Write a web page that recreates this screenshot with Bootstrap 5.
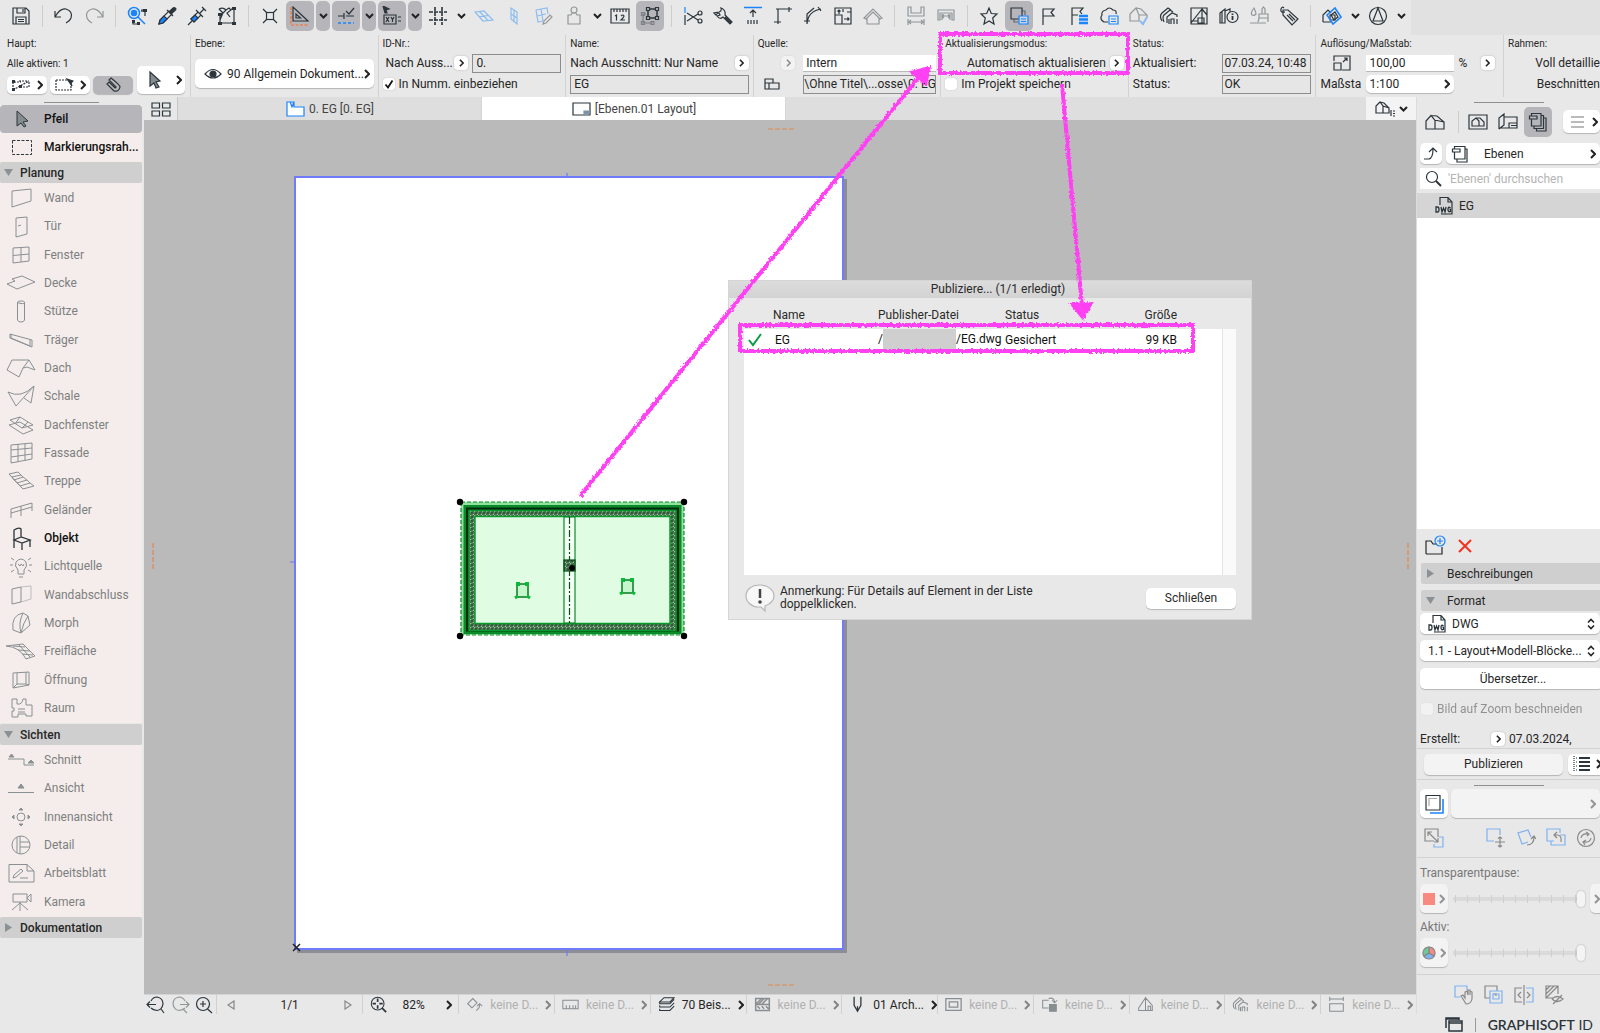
<!DOCTYPE html>
<html lang="de">
<head>
<meta charset="utf-8">
<meta name="viewport" content="width=device-width, initial-scale=1">
<title>Ebenen.01 Layout</title>
<link href="https://cdn.jsdelivr.net/npm/bootstrap@5.3.0/dist/css/bootstrap.min.css" rel="stylesheet">
<style>
:root{--ink:#2b353b;--panel:#e8e8e8;--pressed:#b5b5ba;--rule:#d2d2d2;--blue:#1a84ff}
body{font-family:Roboto,"Liberation Sans",sans-serif;font-size:12px;line-height:16px;color:#262626;background:var(--panel);overflow:hidden}
button,input,select{font:inherit;color:inherit}
button{border:0;background:none;padding:0}
svg{display:block;flex:none;fill:none;stroke:currentColor;stroke-width:1.2}
.ic{width:20px;height:20px;color:var(--ink)}
.s-blue{stroke:#8cbcf0}.s-gray{stroke:#888}
.chv{width:6px;height:10px;stroke-width:2;color:#222}
.chd{width:9px;height:6px;stroke-width:2;color:#222}
.off{opacity:.45}
.page{min-height:100vh}
/* toolbar */
.toolbar-strip{background:#e1e1e1;height:35px}
.toolbar-in{background:var(--panel);padding:1px 2px 4px 6px}
.tb,.tbd{height:30px;display:flex;align-items:center;justify-content:center;border-radius:5px;margin:0 1px}
.tb{width:28px}.tbd{width:14px}
.pressed,.white-btn.pressed{background:var(--pressed)}
.vr1{width:1px;height:22px;margin:0 6px;background:#cdcdcd}
/* info bar */
.infobar{display:grid;grid-template-columns:190px repeat(7,minmax(0,1fr)) 97px;height:62px}
.sec{border-left:1px solid var(--rule);padding:1px 4px 0;overflow:hidden;white-space:nowrap}
.sec:first-child{border:0;padding-left:7px}
.cap{font-size:10px;line-height:16px;display:block}
.r2,.r3{height:18px;display:flex;align-items:center}
.r2{margin-top:2px}.r3{margin-top:3px}
.white-btn{background:#fff;border-radius:5px;box-shadow:0 1px 1px rgba(0,0,0,.22);display:flex;align-items:center;flex:none}
.mini{width:14px;height:14px;background:#fff;border-radius:4px;box-shadow:0 0 2px rgba(0,0,0,.25);display:flex;align-items:center;justify-content:center;flex:none}
.mini .chv{width:5px;height:8px}
.ro{height:19px;border:1px solid #8d8d8d;background:#e6e6e6;padding:0 3px;border-radius:0;min-width:0}
.wf{height:17px;border:0;border-bottom:1px solid #bbb;background:#fff;padding:0 3px;min-width:0}
.tick{appearance:none;width:12px;height:12px;background:#fff;border-radius:3px;box-shadow:0 0 1px rgba(0,0,0,.35);margin:0;flex:none}
.tick:checked{background:#fff url("data:image/svg+xml,%3Csvg xmlns='http://www.w3.org/2000/svg' viewBox='0 0 12 12'%3E%3Cpath d='M2.5 6.5 5 9.5 9.5 2.5' fill='none' stroke='%23111' stroke-width='1.8'/%3E%3C/svg%3E")}
/* tool palette */
.palette{width:144px;padding-right:2px}
.grip{height:8px;padding-top:5px}
.grip i{display:block;height:1px;width:55px;margin:0 auto;background:#8f8f8f}
.tools{background:#f5edeb;list-style:none;margin:0;padding:1px 0}
.tools button{display:flex;align-items:center;width:100%;height:28px;padding-left:6px;color:#7d7f80;white-space:nowrap}
.tools li:nth-child(3n) button{height:29px}
.tools svg{width:30px;height:24px;margin-right:8px;stroke-width:1;color:#8a9093}
.tools button.live{color:#111;font-weight:500}
.tools button.live svg{color:var(--ink)}
.heads{padding:0 0 1px}
.heads button.sel{background:var(--pressed);border-radius:4px}
.ghead{display:flex;align-items:center;gap:7px;width:100%;height:21px;background:#cfcfcf;border-radius:2px;padding-left:4px;font-weight:500}
.ghead svg{width:9px;height:9px;fill:#8a9093;stroke:none}
/* centre */
.tabs{height:23px;background:#dedede}
.tabs button{display:flex;align-items:center;justify-content:center;gap:4px;color:#444}
.tab{width:304px;border-right:1px solid #d6d6d6}
.tab.on{background:#fff}
.stage{background:#bababa;position:relative;overflow:hidden}
.sheet{position:absolute;left:150px;top:56px;width:550px;height:774px;background:#fff;border:2px solid #6f7bfb;box-shadow:3px 3px 0 #8d8d95}
.dash{position:absolute;color:#e0894f}
.statusbar{height:20px;border-top:1px solid #d4d4d4;white-space:nowrap}
.cell{border-left:1px solid #d0d0d0;display:flex;align-items:center;width:96px;flex:0 1 96px;min-width:0;padding:0 6px 0 7px;gap:7px}
.cell .chv{margin-left:auto}
.cell .ic{width:17px;height:17px}
.cell.dim{color:#b0b0b0}
.cell.dim .ic,.cell.dim .chv{opacity:.5}
/* publish dialog */
.pub{position:absolute;left:584px;top:160px;width:524px;height:340px;background:#e8e8e8;border:1px solid #d5d5d5;color:#2a2a2a}
.pub-title{height:17px;background:linear-gradient(#dcdcdc,#d3d3d3);text-align:center;line-height:16px;padding-left:16px}
.pub-body{padding:9px 15px 0}
.pub table{width:491px;table-layout:fixed;margin:0}
.pub th{font-weight:400;height:22px;padding:0 0 6px;vertical-align:middle}
.pub td{height:21px;padding:0;background:#fff;color:#111}
.listbg{background:#fff;height:225px}
.redact{display:inline-block;width:73px;height:21px;background:#cfcfcf;vertical-align:middle}
.track{position:absolute;right:15px;top:48px;width:14px;height:246px;background:#fafafa;border-left:1px solid #e4e4e4}
/* right column */
.side{width:184px;border-left:1px solid #dcdcdc;white-space:nowrap;overflow:hidden}
.side .h21{height:21px}
.side .ghead{font-weight:400;padding-left:5px;gap:12px}
.side ::placeholder{color:#b4b4b4;opacity:1}
.bar{background:#d5d5d5}
.plist{background:#fff;height:311px}
.pop{height:21px;margin:0 0 0 3px;padding:0 5px 0 8px}
.pop select{appearance:none;border:0;background:none;padding:0;flex:1 1 auto;min-width:0;outline:0}
.rng{appearance:none;flex:none;width:132px;height:18px;background:repeating-linear-gradient(90deg,#cfcfcf 0 1px,transparent 1px 12px) 2px 5px/124px 8px no-repeat,linear-gradient(#dadada,#dadada) 0 7px/128px 4px no-repeat;margin:0}
.rng::-webkit-slider-thumb{appearance:none;width:8px;height:16px;border-radius:4px;background:#f4f4f4;box-shadow:0 0 2px rgba(0,0,0,.3)}
.soft{background:#f3f3f3}
.line{height:1px;background:#d2d2d2}
.foot{height:21px;padding-right:7px}
.brandtxt{font-family:Lato,sans-serif;font-size:14px;line-height:20px;color:var(--ink)}
.marks{position:absolute;inset:0;width:1600px;height:1033px;pointer-events:none;color:#ff3ff3}
</style>
<script src="https://cdn.jsdelivr.net/npm/bootstrap@5.3.0/dist/js/bootstrap.bundle.min.js"></script>
</head>
<body>
<svg width="0" height="0" class="position-absolute" aria-hidden="true">
<symbol id="cr" viewBox="0 0 6 10"><path d="M1 1 5 5 1 9"/></symbol>
<symbol id="cd" viewBox="0 0 9 6"><path d="M1 1 4.500 4.500 8 1"/></symbol>
<symbol id="ud" viewBox="0 0 8 12"><path d="M1 4.500 4 1.500 7 4.500M1 7.500 4 10.500 7 7.500" stroke-width="1.600"/></symbol>
<symbol id="arrow" viewBox="0 0 20 20"><path d="M5 2 15 11 11 12 14 17 11 18 9 13 5 16Z" fill="#848c90"/></symbol>
<symbol id="house" viewBox="0 0 20 20"><path d="M1 17V9L6 3.500 10 8.500V17ZM6 3.500 12 4 19 10V17H10M10 8.500H12L19 10"/></symbol>
<symbol id="dwg" viewBox="0 0 20 20"><path d="M5 9V1.500H13L17 6V18H6M13 1.500V6H17"/><g stroke-width="1.300"><path d="M1 11V16H2.500Q4 16 4 13.500 4 11 2.500 11ZM6 11 7 16 8.500 12 10 16 11 11M15.500 12Q13 10 13 13.500 13 16.500 15.500 15.500V13.500H14.500"/></g></symbol>
<symbol id="stack" viewBox="0 0 20 20"><path d="M3.500 4V1.500H13V14H3.500V7M1.500 4H9V7H1.500ZM13 3.500H15.500V16.500H6V14M15.500 6H18V19H8.500V16.500"/></symbol>
<symbol id="page" viewBox="0 0 20 20"><path d="M4.500 5V2.500H15V15H4.500V8M2.500 5H10V8H2.500ZM15 5H17V18H7V15"/></symbol>
<symbol id="tri-d" viewBox="0 0 9 9"><path d="M0 1H9L4.500 8Z"/></symbol>
<symbol id="tri-r" viewBox="0 0 9 9"><path d="M1 0 8 4.500 1 9Z"/></symbol>
<symbol id="quick" viewBox="0 0 20 20"><path d="M3 15Q0 10 3 7L9 2 12 4M5 16Q3 11 5 9L11 4 14 6M8 17V11L13 7 18 9V11M10 18V13M12 18V13H15V18M18 18V13"/></symbol>
</svg>

<div class="page d-flex flex-column">
<header>
<div class="toolbar-strip d-flex">
<div class="toolbar-in d-flex align-items-center" role="toolbar" aria-label="Standard">
<button class="tb" aria-label="Sichern"><svg class="ic" viewBox="0 0 20 20"><path d="M2 2H15L18 5V18H2ZM6 2V7H14V2M5 18V11H15V18M7 13.500H13M7 15.500H13M12 3V6"/></svg></button>
<span class="vr1"></span>
<button class="tb" aria-label="Widerrufen"><svg class="ic" viewBox="0 0 20 20"><path d="M1 5V11H7M1 11Q6 2 12 3 19 5 17 12 16 15 12 17"/></svg></button>
<button class="tb off" aria-label="Wiederholen"><svg class="ic" viewBox="0 0 20 20"><path d="M19 5V11H13M19 11Q14 2 8 3 1 5 3 12 4 15 8 17"/></svg></button>
<span class="vr1"></span>
<button class="tb" aria-label="Suchen und Aktivieren"><svg class="ic" viewBox="0 0 20 20"><g stroke="#1a84ff" stroke-width="1.500"><circle cx="7" cy="7" r="5.500"/><circle cx="7" cy="7" r="2.500" fill="#1a84ff"/><path d="M11 11 18 18"/></g><path d="M14 4H18V10M15 6V4M6 14V18H12"/><path d="M16 3h4v3h-4zM5 14h3v3H5zM10 16h3v3h-3z" fill="currentColor" stroke="none"/></svg></button>
<button class="tb" aria-label="Parameter aufnehmen"><svg class="ic" viewBox="0 0 20 20"><path d="M2 18 3 14 12 5 15 8 6 17Z"/><path d="M2 18 3 14 7 10 10 13 6 17Z" fill="#1a84ff"/><path d="M10 4 16 10M13 5 16 2Q18 1 19 3 19 4 15 7Z" fill="#2b353b"/></svg></button>
<button class="tb" aria-label="Parameter übertragen"><svg class="ic" viewBox="0 0 20 20"><path d="M1 19 5 15M4 13 11 6 14 9 7 16ZM9 4 16 11M13 7 17 3M15 1 19 5"/><path d="M4 13 8 9 11 12 7 16Z" fill="#1a84ff"/></svg></button>
<button class="tb" aria-label="Bearbeiten"><svg class="ic" viewBox="0 0 20 20"><path d="M3 8V17H17V3H14M2 3Q6 1 9 4L12 2 14 4 10 7 13 11M2 3 6 7 3 14M6 7 9 4"/><path d="M1 7h4v3H1zM15 1h4v3h-4zM15 16h4v3h-4zM1 16h4v3H1z" fill="currentColor" stroke="none"/></svg></button>
<span class="vr1"></span>
<button class="tb" aria-label="Fangpunkte"><svg class="ic" viewBox="0 0 20 20"><path d="M3 3 17 17M17 3 3 17"/><rect x="6.500" y="6.500" width="7" height="7" fill="#e8e8e8"/></svg></button>
<button class="tb pressed" aria-label="Hilfslinien"><svg class="ic" viewBox="0 0 20 20"><path d="M3 1V15H18ZM6 8V12H10.500Z"/><path d="M1 1V19H19" stroke="#ff6a24" stroke-dasharray="3 1.500"/></svg></button>
<button class="tbd pressed" aria-label="Menü"><svg class="chd"><use href="#cd"/></svg></button>
<button class="tb pressed" aria-label="Fanghilfe"><svg class="ic" viewBox="0 0 20 20"><path d="M2 10H8M8 7V13M10 10H18M10 5 13 8 18 2"/><path d="M2 17H18" stroke="#1a84ff" stroke-width="1.500" stroke-dasharray="3 2"/></svg></button>
<button class="tbd pressed" aria-label="Menü"><svg class="chd"><use href="#cd"/></svg></button>
<button class="tb pressed" aria-label="Koordinaten"><svg class="ic" viewBox="0 0 20 20"><path d="M2 9H14V18H2ZM16 11H19M16 15H19M4 11 7 16M7 11 4 16M9 11 10.500 13.500 12 11M10.500 13.500V16"/><path d="M1 0 7 3 4 4 5 7 3 7Z" fill="currentColor"/></svg></button>
<button class="tbd pressed" aria-label="Menü"><svg class="chd"><use href="#cd"/></svg></button>
<button class="tb" aria-label="Raster"><svg class="ic" viewBox="0 0 20 20"><path d="M7 1V19M14 1V19M1 6H19M1 14H19" stroke-width="1.600" stroke-dasharray="4 1"/></svg></button>
<button class="tbd" aria-label="Menü"><svg class="chd"><use href="#cd"/></svg></button>
<button class="tb" aria-label="Ebene"><svg class="ic s-blue" viewBox="0 0 20 20"><path d="M1 6 10 5 19 14 9 15ZM5 10.500 15 9.500M5.500 5.500 14 14.500"/></svg></button>
<button class="tb" aria-label="Ebene vertikal"><svg class="ic s-blue" viewBox="0 0 20 20"><path d="M7 2 13 6V18L7 13ZM7 8 13 12M10 4V15"/></svg></button>
<button class="tb" aria-label="Ebene bearbeiten"><svg class="ic" viewBox="0 0 20 20"><path d="M2 4 13 2 14 8M2 4 4 16 9 15M3 10 12 8M7 3 9 15" stroke="#8cbcf0"/><path d="M9 18 10 15 16 9 18 11 12 17Z" stroke="#999"/></svg></button>
<button class="tb off" aria-label="Gewicht"><svg class="ic" viewBox="0 0 20 20"><circle cx="10" cy="4" r="3"/><path d="M4 18V9H7L8 7H12L13 9H16V18Z"/></svg></button>
<button class="tbd" aria-label="Menü"><svg class="chd"><use href="#cd"/></svg></button>
<button class="tb" aria-label="Maß"><svg class="ic" viewBox="0 0 20 20"><path d="M1 3H19V17H1ZM4 3V6M7 3V6M10 3V6M13 3V6M16 3V6M5 10 6.500 9V14.500M11 10Q13 8 14 10 14 11 11 14H15"/></svg></button>
<button class="tb pressed" aria-label="Gruppen"><svg class="ic" viewBox="0 0 20 20"><path d="M8 3H17V12H8Z" stroke-width="1.500"/><g fill="#b5b5ba"><path d="M6.500 1.500h3v3h-3zM15.500 1.500h3v3h-3zM6.500 10.500h3v3h-3zM15.500 10.500h3v3h-3z"/></g><path d="M6 8H3V17H12V15M1.500 6.500h3v3h-3zM1.500 15.500h3v3h-3zM11 15.500h3v3h-3z" opacity=".4"/></svg></button>
<span class="vr1"></span>
<button class="tb" aria-label="Trennen"><svg class="ic" viewBox="0 0 20 20"><path d="M2 1V7" stroke="#1a84ff"/><path d="M2 9V19M4 7 15 14M4 15 15 8"/><circle cx="17" cy="7" r="2"/><circle cx="17" cy="15" r="2"/></svg></button>
<button class="tb" aria-label="Anpassen"><svg class="ic" viewBox="0 0 20 20"><path d="M1 7 3 9Q6 5 7 9L4 10Q7 14 10 11L17 18 19 16 12 9Q13 4 8 2 9 5 6 6Z"/><path d="M12 11 18 17" stroke-width="2.200"/></svg></button>
<button class="tb" aria-label="Ausrichten"><svg class="ic" viewBox="0 0 20 20"><path d="M1 1.500H19" stroke="#1a84ff" stroke-width="1.500"/><path d="M10 11V4M7 7 10 4 13 7M5 14V18M8 14V18M11 14V18M14 14V18"/></svg></button>
<button class="tb" aria-label="Schneiden"><svg class="ic" viewBox="0 0 20 20"><path d="M5 18V3H19M1 16H8M16 1V6M3 3H6"/></svg></button>
<button class="tb" aria-label="Abrunden"><svg class="ic" viewBox="0 0 20 20"><path d="M4 18Q5 5 18 3M1 15H7M15 1 18 5M4 18V8L11 2"/></svg></button>
<button class="tb" aria-label="Größe ändern"><svg class="ic" viewBox="0 0 20 20"><path d="M2 2H18V18H2ZM2 9H9V18M6 8V4M4.500 5.500 6 4 7.500 5.500M11 13H16M14.500 11.500 16 13 14.500 14.500M10 3V6M14 6H18"/></svg></button>
<button class="tb off" aria-label="Dach"><svg class="ic" viewBox="0 0 20 20"><path d="M1 12 10 3 19 12 17 13 10 6 3 13ZM4 12V18H16V12"/></svg></button>
<span class="vr1"></span>
<button class="tb off" aria-label="Abstand"><svg class="ic" viewBox="0 0 20 20"><path d="M2 1V10H18V1H15V7H5V1ZM2 13V19M18 13V19M3 16H17M5 14 3 16 5 18M15 14 17 16 15 18"/></svg></button>
<button class="tb off" aria-label="Bemaßen"><svg class="ic" viewBox="0 0 20 20"><path d="M2 4H18V14H16V7H4V14H2ZM6 10H14M8 8.500 6 10 8 12M12 8.500 14 10 12 12M6 8V14M14 8V14"/></svg></button>
<span class="vr1"></span>
<button class="tb" aria-label="Favoriten"><svg class="ic" viewBox="0 0 20 20"><path d="M10 2 12.300 7.500 18 8 13.700 12 15 18 10 15 5 18 6.300 12 2 8 7.700 7.500Z"/></svg></button>
<button class="tb pressed" aria-label="Zeichnungsmanager"><svg class="ic" viewBox="0 0 20 20"><path d="M2 2H13V13H2Z"/><path d="M5 13V16H9M13 5H16V9" opacity=".6"/><path d="M10 10H19V18H10Z" stroke="#1a84ff" fill="#c6d3e8"/><path d="M12 13H17M12 15.500H17" stroke="#1a84ff"/></svg></button>
<button class="tb" aria-label="Fahne"><svg class="ic" viewBox="0 0 20 20"><path d="M4 19V3H15L12 6.500 15 10H4"/></svg></button>
<button class="tb" aria-label="Fahnenliste"><svg class="ic" viewBox="0 0 20 20"><path d="M3 19V2H14L11 5.500 13 8M3 9H9"/><path d="M10 10H19M10 13.500H19M10 17H19" stroke="#1a84ff" stroke-width="2.400"/></svg></button>
<button class="tb" aria-label="Wolke"><svg class="ic" viewBox="0 0 20 20"><path d="M9 16H5Q0 13 3 9 2 5 7 4 10 0 14 4 18 4 17 8"/><path d="M10 10H19V18H10ZM12 13H17M12 15.500H17" stroke="#1a84ff"/></svg></button>
<button class="tb off" aria-label="Prüfen"><svg class="ic" viewBox="0 0 20 20"><path d="M1 8 7 2 12 3 18 9V12M1 8V15H10V9L7 2M10 9 18 9"/><path d="M11 15 14 18 18 11" stroke="#1a84ff" stroke-width="2"/></svg></button>
<button class="tb" aria-label="Umbau"><svg class="ic"><use href="#quick"/></svg></button>
<button class="tb" aria-label="Ansicht"><svg class="ic" viewBox="0 0 20 20"><path d="M2 2H18V18H2ZM2 17 13 3V17M13 3 18 9M9 12H15V17H9ZM2 15H9"/></svg></button>
<button class="tb" aria-label="Info"><svg class="ic" viewBox="0 0 20 20"><path d="M1 17V7L6 3V17ZM6 5 11 3V6M3 17V6"/><circle cx="13.500" cy="11" r="5.500"/><path d="M13.500 10V14M13.500 7.500V9" stroke-width="1.800"/></svg></button>
<button class="tb off" aria-label="Oberflächen"><svg class="ic" viewBox="0 0 20 20"><path d="M5 2Q1 7 3 9 5 10 7 8 7 6 5 2ZM10 8H19V12H10ZM13 8V3L14.500 1 16 3V8M10 12 9 16M19 12V16M1 17H17"/></svg></button>
<button class="tb" aria-label="Etikett"><svg class="ic" viewBox="0 0 20 20"><path d="M4 4 9 4 19 13 13 19 4 9ZM8 9 14 15M10 8 16 14"/><path d="M6 6Q1 7 2 3 3 0 5 2"/></svg></button>
<span class="vr1"></span>
<button class="tb" aria-label="3D"><svg class="ic" viewBox="0 0 20 20"><path d="M1 16V9L6 4 9 7M1 16H9M8 9H13V14H8Z"/><path d="M5 9 13 2 19 11 11 18Z" stroke="#1a84ff" stroke-width="1.600"/><path d="M9 9 13 6 16 11 12 14Z"/></svg></button>
<button class="tbd" aria-label="Menü"><svg class="chd"><use href="#cd"/></svg></button>
<button class="tb" aria-label="Norden"><svg class="ic" viewBox="0 0 20 20"><circle cx="10" cy="10" r="8.500"/><path d="M10 2 15 15H5Z"/></svg></button>
<button class="tbd" aria-label="Menü"><svg class="chd"><use href="#cd"/></svg></button>
</div>
</div>

<div class="infobar">
<section class="sec">
<span class="cap">Haupt:</span>
<div class="d-flex gap-1">
<div>
<span class="cap pt-1 mb-1">Alle aktiven: 1</span>
<div class="d-flex" style="gap:3px">
<button class="white-btn justify-content-between px-1" style="width:40px;height:18px" aria-label="Geometrie"><svg class="ic" viewBox="0 0 20 20"><path d="M2 15V7H10M2 15 18 6M9 12H18V6M8 6H18" stroke-dasharray="2 1"/><path d="M1 5h3v3H1zM1 13h3v3H1zM8 10h3v3H8z" fill="currentColor" stroke="none"/></svg><svg class="chv"><use href="#cr"/></svg></button>
<button class="white-btn justify-content-between px-1" style="width:40px;height:18px" aria-label="Auswahl"><svg class="ic" viewBox="0 0 20 20"><path d="M2 5H14M2 5V15H17V9" stroke-dasharray="2 1"/><path d="M13 4 19 6 17 8 18 11Z" fill="currentColor"/></svg><svg class="chv"><use href="#cr"/></svg></button>
<button class="white-btn pressed justify-content-center" style="width:40px;height:18px" aria-label="Magnet"><svg class="ic" viewBox="0 0 20 20"><path d="M4 9 11 16Q16 17 17 12 17 10 8 3L6 5 13 12Q13 13 12 13L6 7Z"/></svg></button>
</div></div>
<button class="white-btn justify-content-between align-self-end" style="width:48px;height:28px;padding:0 3px 0 8px" aria-label="Pfeilwerkzeug"><svg class="ic"><use href="#arrow"/></svg><svg class="chv"><use href="#cr"/></svg></button>
</div>
</section>
<section class="sec">
<span class="cap">Ebene:</span>
<button class="white-btn w-100 px-1" style="height:29px;margin-top:7px"><svg class="ic ms-1 me-1" viewBox="0 0 20 20"><path d="M2 10Q10 1 18 10 10 18 2 10Z"/><circle cx="10" cy="10" r="3" fill="currentColor"/></svg><span>90 Allgemein Dokument...</span><svg class="chv ms-auto"><use href="#cr"/></svg></button>
</section>
<section class="sec">
<span class="cap">ID-Nr.:</span>
<div class="r2"><label for="idn" style="width:72px;padding-left:3px">Nach Auss...</label><button class="mini me-1" aria-label="Wählen"><svg class="chv"><use href="#cr"/></svg></button><input id="idn" class="ro ms-auto" style="width:89px" value="0." readonly></div>
<div class="r3"><input type="checkbox" class="tick" id="num" checked><label for="num" class="ps-1">In Numm. einbeziehen</label></div>
</section>
<section class="sec">
<span class="cap">Name:</span>
<div class="r2 justify-content-between"><label for="nm">Nach Ausschnitt: Nur Name</label><button class="mini" aria-label="Wählen"><svg class="chv"><use href="#cr"/></svg></button></div>
<div class="r3"><input id="nm" class="ro w-100" value="EG" readonly></div>
</section>
<section class="sec">
<span class="cap">Quelle:</span>
<div class="r2 justify-content-end gap-2"><button class="mini off" disabled aria-label="Wählen"><svg class="chv"><use href="#cr"/></svg></button><input class="wf" style="width:133px" value="Intern" aria-label="Quelle"></div>
<div class="r3 justify-content-between"><svg class="ic ms-1" viewBox="0 0 20 20"><path d="M3 5H11V9H17V15H7V9H3ZM3 9V15H7M11 9H7"/></svg><input class="ro px-0" style="width:133px" value="\Ohne Titel\...osse\0. EG" readonly aria-label="Pfad"></div>
</section>
<section class="sec">
<span class="cap">Aktualisierungsmodus:</span>
<div class="r2 justify-content-end gap-1"><span>Automatisch aktualisieren</span><button class="mini" aria-label="Modus wählen"><svg class="chv"><use href="#cr"/></svg></button></div>
<div class="r3"><input type="checkbox" class="tick" id="prj"><label for="prj" class="ps-1">Im Projekt speichern</label></div>
</section>
<section class="sec">
<span class="cap">Status:</span>
<div class="r2 justify-content-between"><label for="ak">Aktualisiert:</label><input id="ak" class="ro" style="width:89px;padding:0 1px" value="07.03.24, 10:48" readonly></div>
<div class="r3 justify-content-between"><label for="st">Status:</label><input id="st" class="ro" style="width:89px;padding:0 1px" value="OK" readonly></div>
</section>
<section class="sec">
<span class="cap">Auflösung/Maßstab:</span>
<div class="r2"><svg class="ic" style="margin:0 14px 0 12px" viewBox="0 0 20 20"><path d="M2 8V3H18V17H10M2 10H9V17H2ZM11 9 15 5M12 5H15V8"/></svg><input class="wf" style="width:88px" value="100,00" aria-label="Auflösung"><span class="ps-1 flex-fill">%</span><button class="mini me-1" aria-label="Wählen"><svg class="chv"><use href="#cr"/></svg></button></div>
<div class="r3"><span style="width:46px">Maßsta</span><button class="white-btn justify-content-between" style="width:88px;height:18px;padding:0 4px 0 3px">1:100<svg class="chv"><use href="#cr"/></svg></button></div>
</section>
<section class="sec">
<span class="cap">Rahmen:</span>
<div class="r2 justify-content-end" style="margin-right:-4px">Voll detaillie</div>
<div class="r3 justify-content-end" style="margin-right:-4px">Beschnitten</div>
</section>
</div>
</header>

<main class="d-flex flex-fill">
<nav class="palette" aria-label="Werkzeuge">
<div class="grip"><i></i></div>
<ul class="tools heads">
<li><button class="live sel"><svg viewBox="0 0 30 24"><path d="M11 4 22 14 17 15 20 19 18 20 15 16 11 19Z" fill="#848c90"/></svg>Pfeil</button></li>
<li><button class="live"><svg viewBox="0 0 30 24"><path d="M6.500 5.500H25.500V19.500H6.500Z" stroke-dasharray="3 1.500"/></svg>Markierungsrah...</button></li>
</ul>
<button class="ghead"><svg><use href="#tri-d"/></svg>Planung</button>
<ul class="tools">
<li><button><svg viewBox="0 0 30 24"><path d="M6 5 25 3V15L6 21Z"/></svg>Wand</button></li>
<li><button><svg viewBox="0 0 30 24"><path d="M10 4 21 3V20L10 23ZM12 12 15 11"/></svg>Tür</button></li>
<li><button><svg viewBox="0 0 30 24"><path d="M7 5 23 4V18L7 20ZM15 4.500V19M7 12.500 23 11"/></svg>Fenster</button></li>
<li><button><svg viewBox="0 0 30 24"><path d="M1 13 9 10 6 8 16 5 29 11 11 18Z"/></svg>Decke</button></li>
<li><button><svg viewBox="0 0 30 24"><path d="M11.500 3V21Q12 23 15 23T18.500 21V3Q18 2 15 2T11.500 3 15 4.500 18.500 3"/></svg>Stütze</button></li>
<li><button><svg viewBox="0 0 30 24"><path d="M4 6 26 12V19L4 10ZM5 6V10L24 18V12"/></svg>Träger</button></li>
<li><button><svg viewBox="0 0 30 24"><path d="M6 4H23L29 14 21 11M23 4 17 12 13 21 1 14 6 4M17 12 21 11"/></svg>Dach</button></li>
<li><button><svg viewBox="0 0 30 24"><path d="M2 8Q15 15 28 2L25 19 18 14M2 8 10 22 28 2"/></svg>Schale</button></li>
<li><button><svg viewBox="0 0 30 24"><path d="M4 7 14 4 27 12 16 15ZM3 12 14 9 27 17 17 21ZM14 4 9 11M16 15 22 9"/></svg>Dachfenster</button></li>
<li><button><svg viewBox="0 0 30 24"><path d="M5 4 26 2V18L5 22ZM12 3V21M19 3V20M5 9 26 7M5 16 26 13"/></svg>Fassade</button></li>
<li><button><svg viewBox="0 0 30 24"><path d="M3 5 12 3 15 6 6 8ZM6 8 8 11 17 8 15 6M8 11 11 14 21 11 17 8M11 14 14 17 24 14 21 11M14 17 17 20 28 17 24 14M3 5 17 20"/></svg>Treppe</button></li>
<li><button><svg viewBox="0 0 30 24"><path d="M5 20V11L26 5V13M5 15 26 9M15 8V18"/></svg>Geländer</button></li>
<li><button class="live"><svg viewBox="0 0 30 24"><path d="M8 14V4Q13 1 15 3V11M8 14 15 11 24 14 16 17ZM8 14V22M16 17V24M24 14V21" stroke-width="1.300"/></svg>Objekt</button></li>
<li><button><svg viewBox="0 0 30 24"><path d="M12 16Q8 12 10 8 15 2 20 8 22 12 18 16V20H12ZM13 23H17M12 10 14 12 15 10 17 12 18 10M5 4 8 6M4 11H7M5 18 8 16M25 4 22 6M26 11H23M25 18 22 16"/></svg>Lichtquelle</button></li>
<li><button><svg viewBox="0 0 30 24"><path d="M6 6 15 4V19L6 21Z"/><path d="M15 4 25 3V16L15 19" opacity=".5"/></svg>Wandabschluss</button></li>
<li><button><svg viewBox="0 0 30 24"><path d="M7 19Q5 4 17 2L22 5 24 14 15 22ZM17 2Q12 12 15 22M22 5Q17 12 15 22"/></svg>Morph</button></li>
<li><button><svg viewBox="0 0 30 24"><path d="M0 7 17 5 29 17 20 20Q14 8 0 7ZM7 7 19 8M12 11 24 12M16 15 27 16M12 5 24 18"/></svg>Freifläche</button></li>
<li><button><svg viewBox="0 0 30 24"><path d="M7 5 23 4V17L7 20ZM11 5V16H20V4M7 20 11 16M23 17 20 16"/></svg>Öffnung</button></li>
<li><button><svg viewBox="0 0 30 24"><path d="M6 3H11V8Q16 9 17 3H20V9H26V20H20V18H12V21H6V15H8V12H6ZM12 13H19M12 16H19"/></svg>Raum</button></li>
</ul>
<button class="ghead" style="margin-top:1px"><svg><use href="#tri-d"/></svg>Sichten</button>
<ul class="tools">
<li><button><svg viewBox="0 0 30 24"><path d="M2 11H18V17H28"/><path d="M3 9 5.500 6 8 9ZM22 15 25 12 28 15Z" fill="currentColor"/></svg>Schnitt</button></li>
<li><button><svg viewBox="0 0 30 24"><path d="M2 16.500H28"/><path d="M12 12 15 8 18 12Z" fill="currentColor"/></svg>Ansicht</button></li>
<li><button><svg viewBox="0 0 30 24"><circle cx="15" cy="12" r="4"/><path d="M13 5 15 3 17 5ZM13 19 15 21 17 19ZM8 10 6 12 8 14ZM22 10 24 12 22 14Z" fill="currentColor"/></svg>Innenansicht</button></li>
<li><button><svg viewBox="0 0 30 24"><circle cx="15" cy="12" r="9"/><path d="M11 4V20M14 3V21M14 9H23M14 14H23"/></svg>Detail</button></li>
<li><button><svg viewBox="0 0 30 24"><path d="M3 3.500H21L28 10V21H3ZM21 3.500V10H28M7 17 8 14 15 8 17 10 10 16ZM14 17H22"/></svg>Arbeitsblatt</button></li>
<li><button><svg viewBox="0 0 30 24"><path d="M7 4H21V12H7ZM21 8 25 4V12ZM14 12V21M14 13 6 20M14 13 22 20"/></svg>Kamera</button></li>
</ul>
<button class="ghead"><svg><use href="#tri-r"/></svg>Dokumentation</button>
</nav>

<div class="flex-fill d-flex flex-column" style="min-width:0">
<div class="tabs d-flex">
<button style="width:34px;background:#e8e8e8;border-right:1px solid #c8c8c8" aria-label="Übersicht"><svg class="ic" viewBox="0 0 20 20"><path d="M1 4H8.500V9H1ZM11.500 4H19V9H11.500ZM1 12H8.500V17H1ZM11.500 12H19V17H11.500Z"/></svg></button>
<button class="tab"><svg class="ic" viewBox="0 0 20 20"><path d="M2 3H9V8H19V17H2ZM5 3 7 8 9 3" fill="#fff" stroke="#1a84ff"/></svg>0. EG [0. EG]</button>
<button class="tab on"><svg class="ic" viewBox="0 0 20 20"><path d="M2 4H19V16H2Z"/><path d="M13 12h5v3h-5z" fill="#7d93a8" stroke="#7d93a8"/></svg>[Ebenen.01 Layout]</button>
<button class="ms-auto" style="width:50px;background:#f3f3f3" aria-label="Modellansicht"><svg class="ic" viewBox="0 0 20 20"><path d="M1 14V7L5 3 8 7V14ZM5 3 9 4 14 9V14H8M8 7 14 9M16 11V17M18 12H20M18 14.500H20M18 17H20"/></svg><svg class="chd"><use href="#cd"/></svg></button>
</div>
<div class="stage flex-fill">
<div class="sheet"></div>
<svg class="position-absolute" style="left:145px;top:50px;width:560px;height:788px" viewBox="0 0 560 788"><path d="M278 3V8M278 780V786M1 392H6" stroke="#6f79f2"/><path d="M4 774 11 781M11 774 4 781" stroke="#222" stroke-width="1.500"/></svg>
<svg class="dash" style="left:624px;top:8px" width="28" height="2"><path d="M0 1H28" stroke-dasharray="5 2"/></svg>
<svg class="dash" style="left:624px;bottom:8px" width="28" height="2"><path d="M0 1H28" stroke-dasharray="5 2"/></svg>
<svg class="dash" style="left:8px;top:423px" width="2" height="28"><path d="M1 0V28" stroke-dasharray="5 2"/></svg>
<svg class="dash" style="right:7px;top:423px" width="2" height="28"><path d="M1 0V28" stroke-dasharray="5 2"/></svg>
<svg class="position-absolute" style="left:312px;top:377px" width="233" height="144" viewBox="0 0 233 144">
<defs><pattern id="hat" width="4" height="4" patternUnits="userSpaceOnUse"><rect width="4" height="4" fill="#d4f3d6"/><path d="M-1 1 1 -1M0 4 4 0M3 5 5 3" stroke="#1b6b2a" stroke-width="1.200"/></pattern></defs>
<rect x="5" y="5" width="223" height="133" fill="#8fe39d" stroke="#0c8a28" stroke-dasharray="4 2"/>
<rect x="9" y="9.500" width="215" height="126" fill="#08461a" stroke="#0a8a2a" stroke-width="3"/>
<rect x="11" y="11.500" width="211" height="122" stroke="#032b0c" stroke-width="2"/>
<rect x="13" y="13.500" width="207" height="120" fill="url(#hat)" stroke="#0a9a2c" stroke-width="1.500"/>
<rect x="19" y="19.500" width="195" height="107" fill="#e0fde3" stroke="#0a9a2c" stroke-width="1.500"/>
<rect x="108" y="20" width="11" height="106" fill="#f4fff5" stroke="#0a8a28"/>
<path d="M113.500 20V126" stroke="#064d17" stroke-dasharray="7 2 2 2"/>
<rect x="108" y="63" width="11" height="11" fill="url(#hat)" stroke="#064d17"/>
<g fill="#c6f7cc" stroke="#087a24" stroke-width="1.500"><rect x="61" y="87" width="11" height="13"/><rect x="166" y="83" width="11" height="13"/></g>
<path d="M60 87h4M69 87h4M165 83h4M174 83h4" stroke="#0aba36" stroke-width="4"/>
<path d="M59 101 62 99M74 101 71 99M164 97 167 95M179 97 176 95" stroke="#0aba36" stroke-width="3"/>
<g fill="#000" stroke="none"><circle cx="4" cy="5" r="3.200"/><circle cx="228" cy="5" r="3.200"/><circle cx="4" cy="139" r="3.200"/><circle cx="228" cy="139" r="3.200"/><circle cx="116" cy="71" r="3"/></g>
</svg>

<div class="pub" role="dialog" aria-label="Publiziere">
<div class="pub-title">Publiziere... (1/1 erledigt)</div>
<div class="pub-body">
<table>
<colgroup><col style="width:29px"><col style="width:105px"><col style="width:127px"><col style="width:116px"><col style="width:56px"><col></colgroup>
<thead><tr><th></th><th>Name</th><th>Publisher-Datei</th><th>Status</th><th class="text-end">Größe</th><th></th></tr></thead>
<tbody><tr><td><svg width="15" height="15" viewBox="0 0 15 15" class="ms-1"><path d="M1 8 5 13 13 2" stroke="#0a9b45" stroke-width="2"/></svg></td><td style="padding-left:2px">EG</td><td class="text-nowrap">/<span class="redact"></span>/EG.dwg</td><td>Gesichert</td><td class="text-end">99 KB</td><td></td></tr></tbody>
</table>
<div class="listbg"></div>
<div class="d-flex align-items-center pt-2">
<svg width="32" height="30" viewBox="0 0 32 30"><path d="M16 2C7 2 2 7 2 13S8 24 14 24H17L21 28 21 23C26 21 30 18 30 13S25 2 16 2Z" fill="#f7f7f7" stroke="#b5b5b5"/><path d="M16 6V15" stroke="#444" stroke-width="2.500"/><circle cx="16" cy="19" r="1.800" fill="#444" stroke="none"/></svg>
<div class="ms-1 flex-fill" style="line-height:13px">Anmerkung: Für Details auf Element in der Liste<br>doppelklicken.</div>
<button class="white-btn justify-content-center" style="width:90px;height:21px">Schließen</button>
</div>
</div>
<div class="track"></div>
</div>
</div>

<footer class="statusbar d-flex">
<div class="d-flex align-items-center justify-content-around" style="width:72px">
<svg class="ic" viewBox="0 0 20 20"><path d="M5 6Q7 2 11 2 17 3 17 9 16 15 11 15.500 7 15 5 13M15 14 18 18M1 9.500H10M4 6.500 1 9.500 4 12.500"/></svg>
<svg class="ic off" viewBox="0 0 20 20"><path d="M15 6Q13 2 9 2 3 3 3 9 4 15 9 15.500 13 15 15 13M13 14 17 18M10 9.500H19M16 6.500 19 9.500 16 12.500"/></svg>
<svg class="ic" viewBox="0 0 20 20"><circle cx="9" cy="9" r="6.500"/><path d="M13.500 14 18 18M6 9H12M9 6V12"/></svg></div>
<div class="cell justify-content-between" style="flex-basis:147px;padding:0 10px"><svg width="8" height="10"><path d="M7 1V9L1 5Z" stroke="#888"/></svg>1/1<svg width="8" height="10"><path d="M1 1V9L7 5Z" stroke="#888"/></svg></div>
<div class="cell"><svg class="ic" viewBox="0 0 20 20"><circle cx="9" cy="9" r="7.500"/><path d="M14 14 19 19M9 3V7M9 11V15M3 9H7M11 9H15" stroke-width="2"/></svg><span class="ms-2">82%</span><svg class="chv"><use href="#cr"/></svg></div>
<div class="cell dim"><svg class="ic" viewBox="0 0 20 20"><path d="M2 9 8 3 13 8 7 14ZM12 17Q16 15 16 10M13 12 16 9 19 12"/></svg>keine D...<svg class="chv"><use href="#cr"/></svg></div>
<div class="cell dim"><svg class="ic" viewBox="0 0 20 20"><path d="M1 5H19V15H1ZM5 15V11M9 15V11M13 15V11M16 15V11"/></svg>keine D...<svg class="chv"><use href="#cr"/></svg></div>
<div class="cell"><svg class="ic" viewBox="0 0 20 20"><path d="M2 7 7 2H19L14 7ZM2 7V9H14L19 4M2 11V13H14L19 8M2 15V17H14L19 12"/></svg>70 Beis...<svg class="chv"><use href="#cr"/></svg></div>
<div class="cell dim"><svg class="ic" viewBox="0 0 20 20"><path d="M2 3H18V17H2ZM2 10H18M2 10 9 3M9 10 16 3M5 10 12 3M4 12 7 15M9 12 12 15M14 12 17 15" stroke-width="1.800"/></svg>keine D...<svg class="chv"><use href="#cr"/></svg></div>
<div class="cell"><svg class="ic" viewBox="0 0 20 20"><path d="M6 1V11L10 18 14 11V1M10 12V18" stroke-width="1.500"/></svg>01 Arch...<svg class="chv"><use href="#cr"/></svg></div>
<div class="cell dim"><svg class="ic" viewBox="0 0 20 20"><path d="M1 3H19V17H1ZM5 7H15V13H5Z" stroke-width="1.500"/></svg>keine D...<svg class="chv"><use href="#cr"/></svg></div>
<div class="cell dim"><svg class="ic" viewBox="0 0 20 20"><path d="M9 14H2V5H9M9 3Q15 1 16 7M13 5 16 8 19 5"/><path d="M10 10h8v8h-8z" fill="currentColor"/></svg>keine D...<svg class="chv"><use href="#cr"/></svg></div>
<div class="cell dim"><svg class="ic" viewBox="0 0 20 20"><path d="M10 2 2 14V17H18V11L10 2V17M13 17V12H16V17"/></svg>keine D...<svg class="chv"><use href="#cr"/></svg></div>
<div class="cell dim"><svg class="ic"><use href="#quick"/></svg>keine D...<svg class="chv"><use href="#cr"/></svg></div>
<div class="cell dim"><svg class="ic" viewBox="0 0 20 20"><path d="M2 9H18V18H2ZM2 1V6M18 1V6M2 3.500H18"/></svg>keine D...<svg class="chv"><use href="#cr"/></svg></div>
</footer>
</div>

<aside class="side">
<div class="grip"><i style="width:70px"></i></div>
<div class="d-flex align-items-center" style="height:33px;padding-left:3px">
<button class="tb" aria-label="Projekt"><svg class="ic"><use href="#house"/></svg></button><span class="vr1 mx-1 ms-2"></span>
<button class="tb" aria-label="Ausschnitte"><svg class="ic" viewBox="0 0 20 20"><path d="M1 3H19V17H1ZM4 14V9L8 6 11 9V14ZM8 6H12L16 10V14H11"/></svg></button>
<button class="tb" aria-label="Layouts"><svg class="ic" viewBox="0 0 20 20"><path d="M1 17V6L6 2V13L1 17M6 5H19V16H3M11 16V11H19M13 13.500H19"/></svg></button>
<button class="tb pressed" aria-label="Publisher"><svg class="ic"><use href="#stack"/></svg></button>
<button class="white-btn gap-2 px-2 ms-auto" style="width:37px;height:23px" aria-label="Menü"><svg width="13" height="12"><path d="M0 1H13M0 6H13M0 11H13" stroke="#777"/></svg><svg class="chv"><use href="#cr"/></svg></button>
</div>
<div class="d-flex gap-1" style="padding:0 0 0 3px;margin-top:5px"><button class="white-btn justify-content-center h21" style="width:22px" aria-label="Nach oben"><svg class="ic" viewBox="0 0 20 20"><path d="M3 15H8Q12 14 12 5M8 8 12 4 16 8"/></svg></button><button class="white-btn flex-fill h21 px-1"><svg class="ic"><use href="#page"/></svg><span style="padding-left:14px">Ebenen</span><svg class="chv ms-auto"><use href="#cr"/></svg></button></div>
<div class="d-flex align-items-center bg-white" style="height:21px;margin:4px 0 4px 3px"><svg class="ic mx-1" viewBox="0 0 20 20"><circle cx="8" cy="8" r="5.500"/><path d="M12 12 17 17" stroke-width="2"/></svg><input class="border-0 p-0 bg-transparent" placeholder="'Ebenen' durchsuchen" aria-label="Suchen" style="width:150px"></div>
<div class="bar d-flex align-items-center gap-1" style="height:25px;padding-left:18px"><svg class="ic"><use href="#dwg"/></svg>EG</div>
<div class="plist"></div>
<div class="d-flex align-items-center" style="height:34px;padding-left:8px;gap:10px">
<svg width="22" height="22" viewBox="0 0 22 22"><path d="M1 19V6H6L8 9H12M1 19H17V12"/><circle cx="15" cy="6" r="5" stroke="#1a84ff"/><path d="M12 6H18M15 3V9" stroke="#1a84ff"/></svg>
<svg width="16" height="16" viewBox="0 0 16 16"><path d="M2 2 14 14M14 2 2 14" stroke="#f3301d" stroke-width="2"/></svg></div>
<button class="ghead ms-1"><svg><use href="#tri-r"/></svg>Beschreibungen</button>
<button class="ghead ms-1" style="margin-top:6px"><svg><use href="#tri-d"/></svg>Format</button>
<div class="white-btn pop" style="margin-top:2px"><svg class="ic me-1"><use href="#dwg"/></svg><select aria-label="Format"><option>DWG</option></select><svg width="8" height="12"><use href="#ud"/></svg></div>
<div class="white-btn pop" style="margin-top:6px"><select aria-label="Einstellung"><option>1.1 - Layout+Modell-Blöcke...</option></select><svg width="8" height="12"><use href="#ud"/></svg></div>
<button class="white-btn pop w-100 justify-content-center" style="margin-top:7px">Übersetzer...</button>
<div class="d-flex align-items-center ps-1 off" style="height:40px"><input type="checkbox" class="tick" id="crop" disabled><label class="ps-1" for="crop">Bild auf Zoom beschneiden</label></div>
<div class="d-flex align-items-center" style="height:19px;padding-left:3px"><span style="width:71px">Erstellt:</span><button class="mini me-1" aria-label="Wählen"><svg class="chv"><use href="#cr"/></svg></button>07.03.2024,</div>
<div class="line"></div>
<div class="d-flex align-items-center" style="height:30px;padding-left:7px;gap:5px"><button class="white-btn justify-content-center soft h21" style="width:139px">Publizieren</button><button class="white-btn h21 px-1 gap-1" style="width:40px" aria-label="Liste"><svg class="ic" viewBox="0 0 20 20"><path d="M2 2V18M4 4H6M4 8H6M4 12H6M4 16H6" stroke-dasharray="1 1"/><path d="M7 4H18M7 8H18M7 12H18M7 16H18" stroke-width="2"/></svg><svg class="chv"><use href="#cr"/></svg></button></div>
<div class="line"></div>
<div class="grip"><i style="width:70px"></i></div>
<div class="d-flex" style="padding:1px 0 0 3px;gap:3px"><button class="white-btn justify-content-center" style="width:28px;height:29px" aria-label="Transparentpause"><svg class="ic" viewBox="0 0 20 20"><path d="M6 19H19V5" stroke="#1a84ff" stroke-width="1.600"/><path d="M2 1.500H16V16H2Z"/><path d="M5 12V4.500H13" stroke="#aaa"/></svg></button><button class="white-btn soft flex-fill justify-content-end px-1" aria-label="Referenz"><svg class="chv off"><use href="#cr"/></svg></button></div>
<div class="d-flex align-items-center" style="height:39px;gap:10px;padding-left:7px">
<svg class="ic me-auto" viewBox="0 0 20 20"><path d="M10 16V19H19V9H15" stroke="#7fb2ef"/><path d="M10 13H1V1H14V9M4 4 14 14M4 8V4H8M10 14H14V10" stroke="#888"/></svg>
<svg class="ic" viewBox="0 0 20 20"><path d="M8 13H1V1H14V7" stroke="#7fb2ef"/><path d="M14 9V19M9 14H19M12 10.500 14 9 16 10.500M12 17.500 14 19 16 17.500" stroke="#888"/></svg>
<svg class="ic" viewBox="0 0 20 20"><path d="M15 9 12 2 2 5 6 16 12 14" stroke="#7fb2ef"/><path d="M11 17Q18 17 18 9M15 11 18 8 20 11" stroke="#888"/></svg>
<svg class="ic" viewBox="0 0 20 20"><path d="M8 13H1V1H14V5M5 13V17H19V7H14" stroke="#7fb2ef"/><path d="M8 7H12Q16 8 15 14M11 4 8 7 11 10" stroke="#888"/></svg>
<svg class="ic s-gray me-1" viewBox="0 0 20 20"><circle cx="10" cy="10" r="8.500"/><path d="M5 10Q6 5 12 6M10 4 13 6 11 8M15 10Q14 15 8 14M10 12 7 14 9 17"/></svg></div>
<div class="line"></div>
<div style="height:26px;padding:7px 0 0 3px;color:#777">Transparentpause:</div>
<div class="d-flex align-items-center" style="height:29px;padding-left:3px;gap:5px"><button class="white-btn soft h-100" style="width:28px;padding-left:3px" aria-label="Farbe"><svg width="12" height="12"><path d="M0 0H12V12H0Z" fill="#f98880" stroke="none"/></svg><svg class="chv off ms-1"><use href="#cr"/></svg></button><input class="rng" type="range" value="100" aria-label="Transparentpause"><button class="white-btn soft h-100 px-1" style="width:20px" aria-label="Mehr"><svg class="chv off"><use href="#cr"/></svg></button></div>
<div style="height:25px;padding:6px 0 0 3px;color:#777">Aktiv:</div>
<div class="d-flex align-items-center" style="height:29px;padding-left:3px;gap:5px"><button class="white-btn soft h-100" style="width:28px;padding-left:2px" aria-label="Farbe"><svg class="s-gray" width="14" height="14" viewBox="0 0 14 14"><path d="M7 7V1A6 6 0 0 1 12.200 10Z" fill="#f98880"/><path d="M7 7 12.200 10A6 6 0 0 1 1.800 10Z" fill="#7fb2ef"/><path d="M7 7 1.800 10A6 6 0 0 1 7 1Z" fill="#6fc79a"/></svg><svg class="chv off ms-1"><use href="#cr"/></svg></button><input class="rng" type="range" value="100" aria-label="Aktiv"></div>
<div class="line" style="margin-top:7px"></div>
<div class="d-flex align-items-center justify-content-center" style="height:39px;gap:10px;padding-right:0">
<svg class="ic" viewBox="0 0 20 20"><path d="M6 12H1V1H13V5" stroke="#7fb2ef"/><path d="M9 14 7 11 9 10 11 13V7L13 6 14 10V5L16 5 16 10V6L18 7V14Q17 19 12 19Z" stroke="#888"/></svg>
<svg class="ic" viewBox="0 0 20 20"><path d="M6 13H1V1H13V6M9 9H12V11" stroke="#888"/><path d="M6 6H18V18H6ZM9 9H15V14H9Z" stroke="#7fb2ef"/></svg>
<svg class="ic" viewBox="0 0 20 20"><path d="M8 3H1V17H8M10 0V20M7 7 4 10 7 13M13 7 16 10 13 13" stroke="#888"/><path d="M12 3H19V17H12" stroke="#7fb2ef"/></svg>
<svg class="ic s-gray" viewBox="0 0 20 20"><path d="M9 13H2V1H14V9M2 5 6 1M2 9 10 1M2 13 14 1M8 14Q13 9 19 14 13 19 8 14M9 19 18 10"/></svg></div>
</aside>
</main>
<footer class="foot d-flex align-items-center justify-content-end gap-2">
<svg width="18" height="15" viewBox="0 0 18 15" color="#2b353b"><path d="M4 4H17V14H4ZM4 6H17M1 11V1H14V3M1 2H14" stroke-width="1.500"/></svg>
<span class="vr1 mx-1" style="height:14px;background:#999"></span>
<span class="brandtxt"><span style="font-weight:600">GRAPHISOFT</span> ID</span>
</footer>
</div>

<svg class="marks" viewBox="0 0 1600 1033" aria-hidden="true">
<filter id="crayon" filterUnits="userSpaceOnUse" x="560" y="20" width="660" height="500"><feTurbulence type="fractalNoise" baseFrequency=".45" numOctaves="2" seed="4"/><feDisplacementMap in="SourceGraphic" scale="4" xChannelSelector="R" yChannelSelector="G"/></filter>
<g filter="url(#crayon)"><path d="M940 34H1128V73H940ZM740 325H1193V351H740ZM580 496 918 78M1062 84 1082 306" stroke-width="4"/>
<path d="M930 67 911 72 926 85ZM1083 319 1071 304 1092 303Z" fill="currentColor" stroke-width="2"/></g>
</svg>
</body>
</html>
